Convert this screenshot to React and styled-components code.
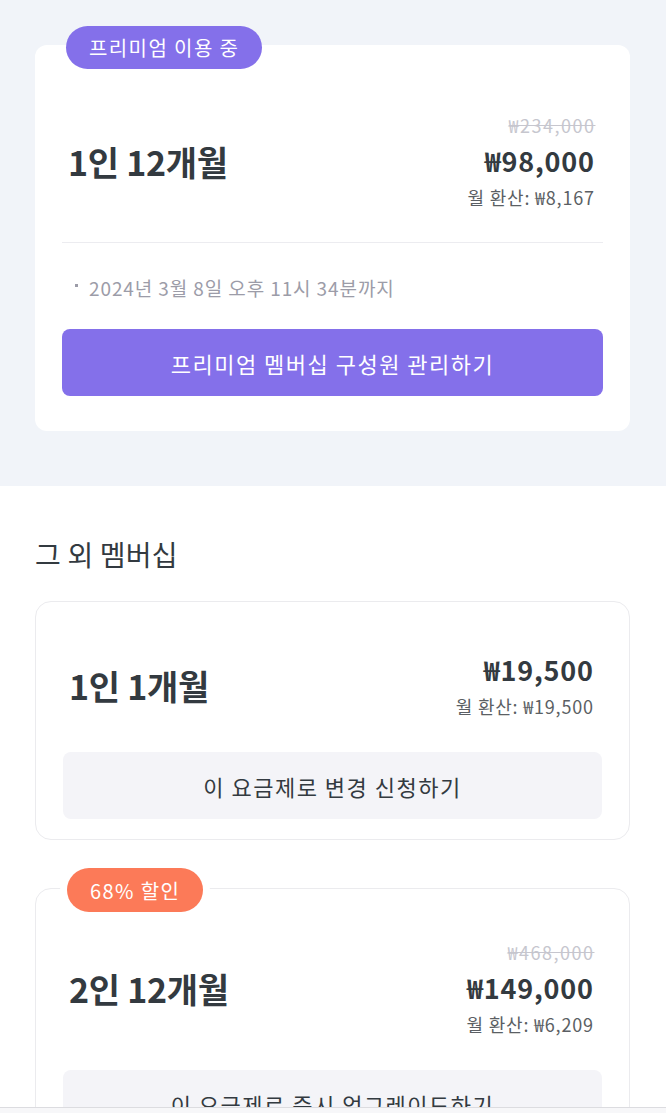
import React from "react";
import styled, { createGlobalStyle } from "styled-components";

const GlobalStyle = createGlobalStyle`
  body {
    margin: 0;
    background: #ffffff;
    font-family: "Noto Sans CJK KR", "Noto Sans", sans-serif;
    color: #333a40;
  }
`;

const PURPLE = "#8470ea";
const ORANGE = "#fc7a58";

const Page = styled.div`
  width: 666px;
`;

const TopSection = styled.section`
  background: #f1f4f9;
  padding: 45px 36px 55px 35px;
`;

const OtherSection = styled.section`
  background: #ffffff;
  padding: 50px 36px 40px 35px;
`;

const SectionTitle = styled.h2`
  margin: 0 0 29px;
  font-size: 28px;
  line-height: 36px;
  font-weight: 400;
  letter-spacing: 0.2px;
  color: #333a40;
`;

const CardList = styled.div`
  display: flex;
  flex-direction: column;
  gap: 48px;
`;

const Card = styled.div`
  position: relative;
  background: #ffffff;
  border-radius: ${(p) => (p.$outlined ? "16px" : "12px")};
  border: ${(p) => (p.$outlined ? "1px solid #ebebee" : "none")};
  padding: ${(p) => p.$top}px 27px ${(p) => p.$bottom}px;
`;

const Badge = styled.span`
  position: absolute;
  left: 31px;
  top: ${(p) => p.$offset}px;
  height: ${(p) => p.$h}px;
  padding: 0 23px;
  display: flex;
  align-items: center;
  border-radius: 999px;
  background: ${(p) => p.$color};
  color: #ffffff;
  font-size: 20px;
  letter-spacing: 1.4px;
  box-shadow: ${(p) => (p.$ring ? "0 0 0 7px #ffffff" : "none")};
`;

const Header = styled.div`
  display: flex;
  align-items: center;
  justify-content: space-between;
  padding: 0 9px 0 6px;
`;

const PlanName = styled.div`
  font-size: 34px;
  font-weight: 700;
  letter-spacing: -0.3px;
  color: #333a40;
  margin-top: ${(p) => p.$nudge || 0}px;
`;

const Prices = styled.div`
  display: flex;
  flex-direction: column;
  align-items: flex-end;
`;

const OldPrice = styled.span`
  font-size: 18px;
  line-height: 24px;
  color: #c6c6ce;
  text-decoration: line-through;
  letter-spacing: 1.5px;
  margin-right: -1.5px;
`;

const Price = styled.span`
  font-size: 27px;
  line-height: 48px;
  font-weight: 700;
  color: #333a40;
  letter-spacing: 0.8px;
  margin-right: -0.8px;
`;

const Monthly = styled.span`
  font-size: 18px;
  line-height: 24px;
  color: #5b5f64;
  letter-spacing: 0.8px;
  margin-right: -0.8px;
`;

const Divider = styled.hr`
  margin: 33px 0 0;
  border: none;
  border-top: 1px solid #ececf0;
`;

const Note = styled.p`
  margin: 32px 0 0;
  padding-left: 13px;
  font-size: 19px;
  line-height: 26px;
  color: #9c9ca8;
  letter-spacing: 0.9px;
  display: flex;
  align-items: center;
  gap: 11px;

  &::before {
    content: "";
    width: 3px;
    height: 3px;
    background: #9c9ca8;
    margin-top: -5px;
  }
`;

const ActionButton = styled.button`
  display: block;
  width: 100%;
  height: 67px;
  margin-top: ${(p) => p.$gap}px;
  border: none;
  border-radius: 8px;
  background: ${(p) => (p.$primary ? PURPLE : "#f4f4f8")};
  color: ${(p) => (p.$primary ? "#ffffff" : "#333a40")};
  font-family: inherit;
  font-size: 22px;
  letter-spacing: 1.5px;
  cursor: pointer;
`;

const BottomBar = styled.div`
  position: fixed;
  left: 0;
  right: 0;
  bottom: 0;
  height: 5px;
  background: #f7f7f9;
  border-top: 1px solid #dcdce0;
`;

const otherPlans = [
  {
    name: "1인 1개월",
    price: "₩19,500",
    monthly: "₩19,500",
    action: "이 요금제로 변경 신청하기",
    top: 44,
  },
  {
    name: "2인 12개월",
    old: "₩468,000",
    price: "₩149,000",
    monthly: "₩6,209",
    action: "이 요금제로 즉시 업그레이드하기",
    badge: "68% 할인",
    top: 51,
  },
];

function PriceBlock({ old, price, monthly }) {
  return (
    <Prices>
      {old && <OldPrice>{old}</OldPrice>}
      <Price>{price}</Price>
      <Monthly>월 환산: {monthly}</Monthly>
    </Prices>
  );
}

export default function App() {
  return (
    <Page>
      <GlobalStyle />
      <TopSection>
        <Card $top={68} $bottom={35}>
          <Badge $color={PURPLE} $offset={-19} $h={43}>
            프리미엄 이용 중
          </Badge>
          <Header>
            <PlanName>1인 12개월</PlanName>
            <PriceBlock old="₩234,000" price="₩98,000" monthly="₩8,167" />
          </Header>
          <Divider />
          <Note>2024년 3월 8일 오후 11시 34분까지</Note>
          <ActionButton $primary $gap={28}>
            프리미엄 멤버십 구성원 관리하기
          </ActionButton>
        </Card>
      </TopSection>

      <OtherSection>
        <SectionTitle>그 외 멤버십</SectionTitle>
        <CardList>
          {otherPlans.map((plan) => (
            <Card key={plan.name} $outlined $top={plan.top} $bottom={20}>
              {plan.badge && (
                <Badge $color={ORANGE} $offset={-21} $h={44} $ring>
                  {plan.badge}
                </Badge>
              )}
              <Header>
                <PlanName $nudge={plan.old ? 0 : 6}>{plan.name}</PlanName>
                <PriceBlock
                  old={plan.old}
                  price={plan.price}
                  monthly={plan.monthly}
                />
              </Header>
              <ActionButton $gap={34}>{plan.action}</ActionButton>
            </Card>
          ))}
        </CardList>
      </OtherSection>
      <BottomBar />
    </Page>
  );
}
